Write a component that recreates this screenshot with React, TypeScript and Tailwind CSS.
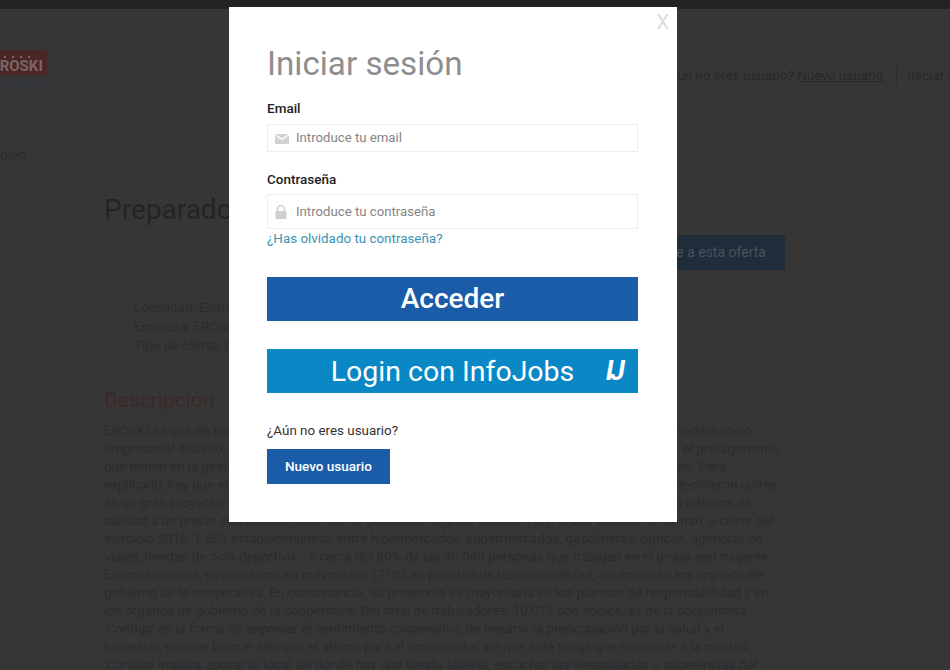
import React from 'react';

const bodyLines = [
  'EROSKI es una de las principales empresas de distribución de España y cuenta con un peculiar modelo socio-',
  'empresarial distinto, basado en la cooperativa de consumo, la participación en la gestión diaria y el protagonismo',
  'que tienen en la gestión las personas trabajadoras y consumidoras dentro de sus órganos sociales. Para',
  'explicarlo, hay que echar la vista atrás, cuando un gran grupo de personas de distintos orígenes decidieron unirse',
  'en un gran proyecto, con el objetivo de acercar a todos los consumidores los productos y servicio básicos de',
  'calidad a un precio competitivo, además de garantizar empleo estable. Hoy, Grupo EROSKI lo forman, a cierre del',
  'ejercicio 2018, 1.652 establecimientos entre hipermercados, supermercados, gasolineras, ópticas, agencias de',
  'viajes, tiendas de ocio deportivo... y cerca del 80% de las 30.048 personas que trabajan en el grupo son mujeres.',
  'En consonancia, su presencia es mayoritaria (71%) en puestos de responsabilidad, así como en los órganos de',
  'gobierno de la cooperativa. En consonancia, su presencia es mayoritaria en los puestos de responsabilidad y en',
  'los órganos de gobierno de la cooperativa. Del total de trabajadores, 10.017 son socios/as de la cooperativa.',
  "'Contigo' es la forma de expresar el sentimiento cooperativo, de resumir la preocupación por la salud y el",
  'bienestar, supone buscar siempre el ahorro para el consumidor sin que este tenga que renunciar a la calidad,',
  "'Contigo' implica apoyar lo local allí donde hay una tienda abierta, escuchar las necesidades o sugerencias del",
];

const LoginModal = () => {
  return (
    <div className="absolute left-[229px] top-[7px] w-[448px] h-[515px] bg-white pl-[38px] pr-[39px] pt-[33px] text-[13.5px]">
      <span className="absolute right-[8px] top-[3px] text-[20px] leading-[24px] text-[#dcdcdc]">X</span>
      <h1 className="text-[33.2px] leading-[48px] text-[#8e8e8e]">Iniciar sesión</h1>

      <label className="block mt-[11px] leading-[18px] font-medium text-[#222]">Email</label>
      <div className="flex items-center mt-[7px] h-[28px] border border-[#eeeeee] pl-[7px]">
        <svg width="14" height="10" viewBox="0 0 14 10" className="mt-[2px]">
          <path d="M0 0h14L7 4.6z" fill="#d2d2d2" />
          <path d="M0 1.6V10h14V1.6L7 6.2z" fill="#d2d2d2" />
        </svg>
        <span className="ml-[7px] text-[13.2px] text-[#858585]">Introduce tu email</span>
      </div>

      <label className="block mt-[18px] leading-[18px] font-medium text-[#222]">Contraseña</label>
      <div className="flex items-center mt-[6px] h-[35px] border border-[#eeeeee] pl-[7px]">
        <svg width="12" height="14" viewBox="0 0 12 14">
          <path d="M2.5 6V4a3.5 3.5 0 0 1 7 0v2" fill="none" stroke="#cfcfcf" strokeWidth="1.6" />
          <rect x="0.5" y="6" width="11" height="8" rx="1" fill="#cfcfcf" />
        </svg>
        <span className="ml-[9px] text-[13.2px] text-[#858585]">Introduce tu contraseña</span>
      </div>
      <a className="block mt-[1px] leading-[18px] text-[13.4px] text-[#3a92b4]">¿Has olvidado tu contraseña?</a>

      <button className="block w-full h-[44px] mt-[29px] bg-[#1a5ca8] text-white text-[28px] font-medium">
        Acceder
      </button>

      <button className="relative block w-full h-[44px] mt-[28px] bg-[#0a88c6] text-white text-[28.5px]">
        <span className="block leading-[45px] text-center">Login con InfoJobs</span>
        <span className="absolute right-[16px] top-0 leading-[44px] text-[27px] font-bold italic tracking-[-3px]">IJ</span>
      </button>

      <p className="mt-[28px] leading-[20px] text-[13.4px] text-[#333]">¿Aún no eres usuario?</p>
      <button className="block w-[123px] h-[35px] mt-[8px] bg-[#1a5ca8] text-white text-[13.5px] font-medium">
        Nuevo usuario
      </button>
    </div>
  );
};

export default function App() {
  return (
    <div className="relative h-[670px] w-[950px] overflow-hidden bg-[#363636] font-['Roboto',sans-serif] text-[13.44px] text-[#2c2c2c]">
      <div className="h-[9px] bg-[#232323]" />

      <header className="flex h-[100px] pt-[41px]">
        <div className="w-[60px] -ml-[13px] shrink-0">
          <div className="flex h-[25px] flex-col items-center justify-end bg-[#4a2626] pb-[2px] text-[#7a6666]">
            <div className="flex gap-[6px] mb-[2px]">
              <span className="h-[2px] w-[2px] bg-[#7a6666]" />
              <span className="h-[2px] w-[2px] bg-[#7a6666]" />
              <span className="h-[2px] w-[2px] bg-[#7a6666]" />
              <span className="h-[2px] w-[2px] bg-[#7a6666]" />
            </div>
            <span className="text-[15px] leading-[13px] font-bold">EROSKI</span>
          </div>
          <div className="text-right pr-[3px] font-['Liberation_Serif',serif] text-[17px] leading-[22px] italic text-[#2e3842]">contigo</div>
        </div>
        <div className="ml-[615px] flex h-[50px] items-center whitespace-nowrap text-[13.5px] text-[#282828]">
          <span>¿Aún no eres usuario?</span>
          <span className="ml-[3px] underline">Nuevo usuario</span>
          <span className="ml-[13px] h-[17px] border-l border-[#2c2c2c]" />
          <span className="ml-[10px]">Iniciar sesión</span>
        </div>
      </header>

      <div className="-ml-[19px] mt-[37px] leading-[18px]">Empleo</div>

      <main className="ml-[104px] w-[681px]">
        <div className="relative mt-[28px] h-[97px]">
          <h2 className="text-[28px] leading-[36px] text-[#242424]">Preparador/a de pescadería</h2>
          <button className="absolute right-0 top-[43px] h-[35px] w-[220px] bg-[#1f2d3b] pl-[38px] text-[14px] text-[#48525c]">
            Inscríbete a esta oferta
          </button>
        </div>

        <ul className="ml-[30px] mt-[9px] leading-[19px]">
          <li>Localidad: Elorrio</li>
          <li>Empresa: EROSKI</li>
          <li>Tipo de oferta: Contrato</li>
        </ul>

        <h3 className="mt-[31px] text-[21px] leading-[28px] text-[#3d2828]">Descripción</h3>

        <div className="mt-[8px] whitespace-nowrap leading-[18px]">
          {bodyLines.map((line) => (
            <div key={line}>{line}</div>
          ))}
        </div>
      </main>

      <LoginModal />
    </div>
  );
}
